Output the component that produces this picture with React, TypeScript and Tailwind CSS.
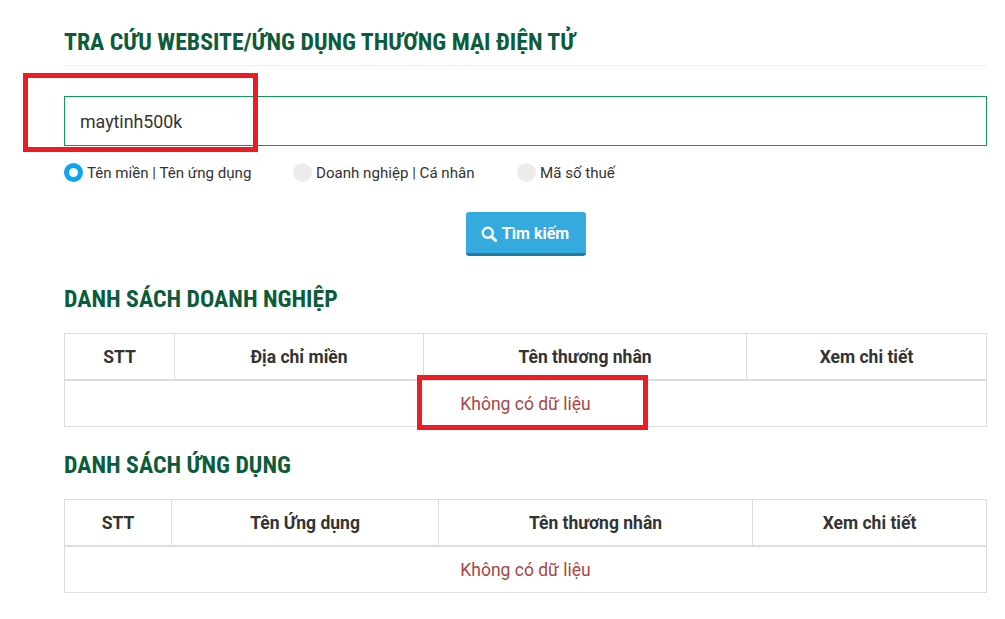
const headingFont = "font-['Roboto_Condensed',Roboto,sans-serif] font-bold text-[#0b5c3b] uppercase";

function Radio({ label, checked, className }: { label: string; checked?: boolean; className: string }) {
  return (
    <label className={`flex items-center gap-[4px] ${className}`}>
      {checked ? (
        <span className="block w-[19px] h-[19px] rounded-full border-[5px] border-[#0ea5f0] bg-white" />
      ) : (
        <span className="block w-[19px] h-[19px] rounded-full bg-[#ececec]" />
      )}
      <span className="pt-[2px] text-[15.1px] text-[#333]">{label}</span>
    </label>
  );
}

function ResultTable({ columns }: { columns: { label: string; width: string }[] }) {
  return (
    <div className="w-[923px] border border-[#ddd] text-[#333]">
      <div className="flex h-[47px] border-b-2 border-[#ddd]">
        {columns.map((col, i) => (
          <div
            key={col.label}
            className={`${col.width} flex items-center justify-center pt-[2px] text-[17.5px] font-bold ${i > 0 ? "border-l border-[#ddd]" : ""}`}
          >
            {col.label}
          </div>
        ))}
      </div>
      <div className="h-[45px] flex items-center justify-center pt-[2px] text-[17.5px] text-[#a94442]">
        Không có dữ liệu
      </div>
    </div>
  );
}

export default function App() {
  return (
    <div className="relative w-[1005px] h-[619px] overflow-hidden bg-white font-['Roboto',sans-serif] pl-[64px] pr-[18px]">
      <div className="pt-[27px] pb-[8px] border-b border-[#eee]">
        <h1 className={`${headingFont} text-[23.8px] leading-[30px]`}>Tra cứu website/ứng dụng thương mại điện tử</h1>
      </div>

      <div className="mt-[30px] h-[50px] border border-[#0a9d5c] flex items-center pl-[15px] pt-[2px] text-[17.8px] text-[#333]">
        maytinh500k
      </div>

      <div className="mt-[17px] flex h-[19px]">
        <Radio checked label="Tên miền | Tên ứng dụng" className="w-[229px]" />
        <Radio label="Doanh nghiệp | Cá nhân" className="w-[224px]" />
        <Radio label="Mã số thuế" className="w-[120px]" />
      </div>

      <div className="mt-[30px] flex justify-center">
        <button className="w-[120px] h-[44px] flex items-center justify-center gap-[5px] pt-[2px] pr-[1px] rounded-[3px] bg-[#35aadf] border-b-[3px] border-[#24799f] text-white text-[16px] font-bold">
          <svg width="16" height="16" viewBox="0 0 16 16" fill="none" stroke="currentColor">
            <circle cx="6.8" cy="6.8" r="5" strokeWidth="2.4" />
            <path d="M10.5 10.5 L14.6 14.6" strokeWidth="3" strokeLinecap="round" />
          </svg>
          Tìm kiếm
        </button>
      </div>

      <h2 className={`${headingFont} mt-[28px] text-[23.8px] leading-[30px]`}>Danh sách doanh nghiệp</h2>
      <div className="mt-[19px]">
        <ResultTable
          columns={[
            { label: "STT", width: "w-[109px]" },
            { label: "Địa chỉ miền", width: "w-[249px]" },
            { label: "Tên thương nhân", width: "w-[323px]" },
            { label: "Xem chi tiết", width: "w-[240px]" },
          ]}
        />
      </div>

      <h2 className={`${headingFont} mt-[23px] text-[23.8px] leading-[30px]`}>Danh sách ứng dụng</h2>
      <div className="mt-[19px]">
        <ResultTable
          columns={[
            { label: "STT", width: "w-[106px]" },
            { label: "Tên Ứng dụng", width: "w-[267px]" },
            { label: "Tên thương nhân", width: "w-[314px]" },
            { label: "Xem chi tiết", width: "w-[234px]" },
          ]}
        />
      </div>

      {/* red annotation boxes */}
      <div className="absolute left-[23px] top-[73px] w-[235px] h-[79px] border-[5px] border-[#ed1c24]" />
      <div className="absolute left-[417px] top-[375px] w-[231px] h-[55px] border-[5px] border-[#ed1c24]" />
    </div>
  );
}
